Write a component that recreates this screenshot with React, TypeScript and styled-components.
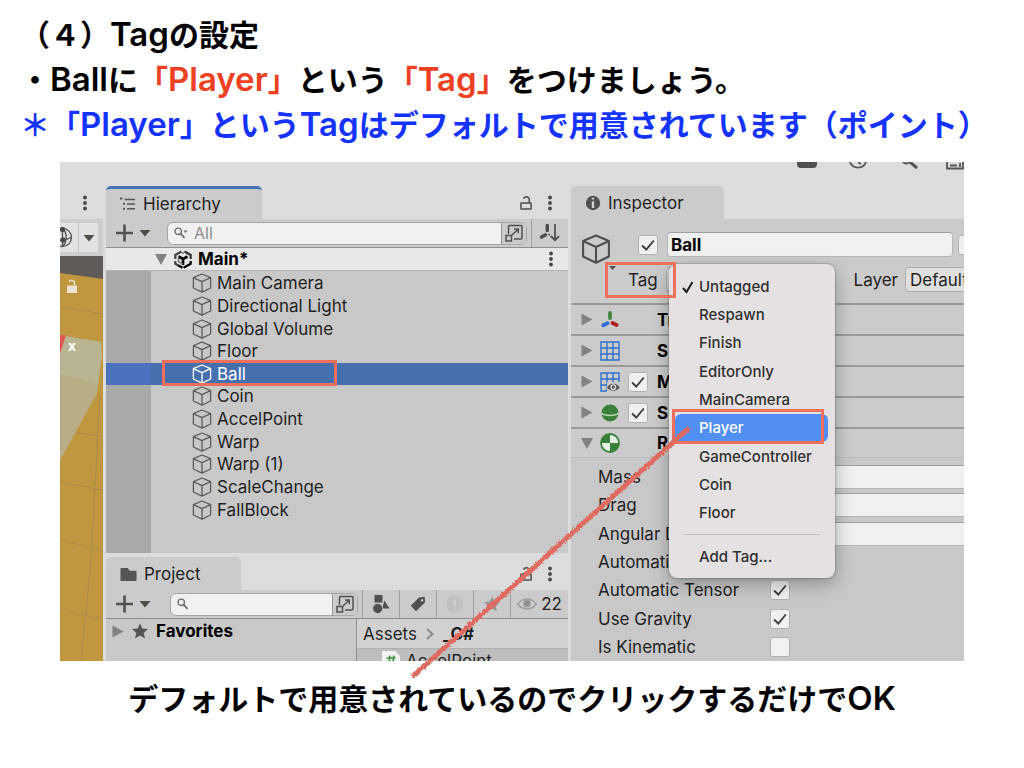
import React from 'react';
import styled, { createGlobalStyle, css } from 'styled-components';

const color = {
  chrome: '#dcdcdc',
  panel: '#cbcbcb',
  content: '#c8c8c8',
  field: '#f0f0f0',
  line: '#8f8f8f',
  ink: '#1f1f1f',
  mark: '#ee6f5c',
};

const GlobalStyle = createGlobalStyle`
  *, *::before, *::after { box-sizing: border-box; }
  body { margin: 0; background: #fff; }
  button, input, select { font: inherit; color: inherit; margin: 0; }
  ul { list-style: none; margin: 0; padding: 0; }
  svg { display: block; flex: none; }
`;

/* ---------- slide ---------- */

const Slide = styled.main`
  padding: 11px 0 47px;
  font-family: 'Noto Sans CJK JP', sans-serif;
  font-size: 30px;
  font-weight: 700;
  line-height: 45px;
  color: #000;
  text-spacing-trim: space-all;
`;

const Heading = styled.header`
  padding: 0 20px;
  white-space: nowrap;
`;

const Title = styled.h1`
  margin: 0;
  font-size: 30px;
  line-height: 45px;
`;

const Line = styled.p<{ $blue?: boolean }>`
  margin: 0;
  color: ${(p) => (p.$blue ? '#1433ff' : '#000')};
`;

const Latin = styled.span`
  font-family: Inter, 'Liberation Sans', sans-serif;
  font-size: 33px;
  font-weight: 600;
  line-height: 1;
`;

const Red = styled.em`
  font-style: normal;
  color: #ee4023;
`;

const Caption = styled.figcaption`
  margin-top: 14px;
  text-align: center;
  white-space: nowrap;
`;

const Figure = styled.figure`
  margin: 16px 0 0;
`;

/* ---------- editor window ---------- */

const Editor = styled.div`
  display: grid;
  grid-template-columns: 43px minmax(0, 462fr) minmax(0, 393fr);
  column-gap: 3px;
  margin: 0 60px;
  background: ${color.chrome};
  font-family: Inter, 'Liberation Sans', sans-serif;
  font-size: 17px;
  font-weight: 400;
  line-height: 20px;
  color: ${color.ink};
  white-space: nowrap;
`;

const Column = styled.section`
  position: relative;
  display: flex;
  flex-direction: column;
  min-width: 0;
`;

const Panel = styled.div`
  display: flex;
  flex: 1;
  flex-direction: column;
  overflow: hidden;
`;

const TopBar = styled.div`
  display: flex;
  justify-content: flex-end;
  height: 24px;
  overflow: hidden;
`;

const TabBar = styled.div`
  display: flex;
  align-items: center;
  height: 33px;
  padding-right: 15px;
`;

const Tab = styled.button<{ $active?: boolean; $width: number }>`
  display: flex;
  align-items: center;
  gap: 7px;
  align-self: stretch;
  width: ${(p) => p.$width}px;
  margin-right: auto;
  padding: ${(p) => (p.$active ? 0 : 1)}px 0 0 14px;
  border: 0;
  border-top: ${(p) => (p.$active ? '3px solid #4373b4' : '0')};
  border-radius: 5px 5px 0 0;
  background: ${color.panel};
`;

const IconButton = styled.button`
  display: flex;
  align-items: center;
  padding: 0;
  border: 0;
  background: none;
`;

const TabTools = styled.div`
  display: flex;
  gap: 15px;
`;

const Toolbar = styled.div`
  display: flex;
  align-items: center;
  height: 29px;
  padding-left: 10px;
  border-bottom: 1px solid ${color.line};
  background: ${color.panel};
`;

const AddButton = styled(IconButton)`
  gap: 6px;
  margin-right: 16px;
`;

const Search = styled.label<{ $wide?: boolean }>`
  display: flex;
  flex: 1;
  align-items: center;
  min-width: 0;
  height: 23px;
  margin-left: ${(p) => (p.$wide ? 0 : 3)}px;
  border: 1px solid #a6a6a6;
  border-radius: 6px;
  background: ${color.field};
  overflow: hidden;
`;

const SearchLead = styled.span`
  padding-left: 6px;
`;

const SearchInput = styled.input`
  flex: 1;
  min-width: 0;
  height: 21px;
  padding: 0 6px;
  border: 0;
  background: none;
  font-size: 16px;
  &::placeholder { color: #8d8d8d; opacity: 1; }
`;

const ExpandButton = styled(IconButton)`
  justify-content: center;
  width: 25px;
  height: 21px;
  border-left: 1px solid #999;
  background: ${color.panel};
`;

const ToolCell = styled(IconButton)<{ $wide?: boolean }>`
  justify-content: center;
  gap: 4px;
  width: ${(p) => (p.$wide ? 58 : 37)}px;
  height: 28px;
  border-left: 1px solid #a0a0a0;
`;

const ToolGap = styled.span`
  width: 4px;
`;

/* ---------- scene strip ---------- */

const KebabSlot = styled.span`
  padding-left: 22px;
`;

const SceneTools = styled.div`
  display: flex;
  height: 37px;
  padding: 4px 5px 4px 0;
  background: #cfcfcf;
`;

const SceneButton = styled(IconButton)`
  flex: 1;
  justify-content: center;
  border-left: 1px solid #c4c4c4;
  background: #e2e2e2;
  overflow: hidden;
  &:first-child {
    flex: 0 0 18px;
    justify-content: flex-end;
    padding-right: 5px;
    border-left: 0;
  }
`;

/* ---------- hierarchy ---------- */

const SceneRow = styled.div`
  display: flex;
  align-items: center;
  gap: 6px;
  height: 23px;
  padding: 0 14px 0 48px;
  border-bottom: 1px solid #b5b5b5;
  background: #e8e8e8;
  color: #000;
`;

const SceneName = styled.strong`
  margin-right: auto;
  font-weight: 700;
`;

const Tree = styled.div`
  padding: 1px 0 32px;
  background: linear-gradient(to right, #a9a9a9 45px, ${color.content} 45px);
`;

const TreeList = styled.ul`
  display: grid;
  grid-template-rows: repeat(11, 1fr);
  height: 249px;
`;

const TreeItem = styled.li<{ $selected?: boolean }>`
  position: relative;
  display: flex;
  align-items: center;
  gap: 5px;
  padding-left: 86px;
  color: ${(p) => (p.$selected ? '#fff' : color.ink)};
  background: ${(p) =>
    p.$selected ? 'linear-gradient(to right, #4a72bd 45px, #4670ad 45px)' : 'none'};
`;

const Mark = styled.span<{ $box: [number, number, number, number] }>`
  position: absolute;
  z-index: 3;
  left: ${(p) => p.$box[0]}px;
  top: ${(p) => p.$box[1]}px;
  width: ${(p) => p.$box[2]}px;
  height: ${(p) => p.$box[3]}px;
  border: 3px solid ${color.mark};
  pointer-events: none;
`;

/* ---------- project ---------- */

const ProjectTabs = styled(TabBar)`
  height: 37px;
  padding-top: 4px;
`;

const ProjectBody = styled.div`
  display: grid;
  grid-template-columns: 250px minmax(0, 1fr);
  flex: 1;
  background: ${color.content};
`;

const Favorites = styled.div`
  display: flex;
  align-items: center;
  gap: 8px;
  height: 24px;
  padding-left: 6px;
  font-weight: 700;
  color: #000;
`;

const Assets = styled.div`
  border-left: 1px solid #8f8f8f;
`;

const Breadcrumb = styled.nav`
  display: flex;
  align-items: center;
  gap: 9px;
  height: 30px;
  padding-left: 6px;
  border-bottom: 1px solid #b0b0b0;
  background: #d1d1d1;
`;

const Crumb = styled.a<{ $current?: boolean }>`
  color: inherit;
  text-decoration: none;
  font-weight: ${(p) => (p.$current ? 700 : 400)};
`;

const AssetRow = styled.div`
  display: flex;
  gap: 6px;
  height: 12px;
  padding: 2px 0 0 25px;
  background: #bebebe;
  overflow: hidden;
`;

/* ---------- inspector ---------- */

const ObjectHeader = styled.div`
  display: flex;
  flex-direction: column;
  gap: 10px;
  height: 84px;
  padding: 13px 0 0 10px;
  background: ${color.panel};
`;

const NameRow = styled.div`
  display: flex;
  align-items: center;
  height: 25px;
`;

const CubeSlot = styled.span`
  flex: none;
  width: 57px;
  padding-top: 8px;
`;

const textField = css`
  border: 1px solid #b7b7b7;
  border-top-color: #a0a0a0;
  background: ${color.field};
`;

const NameInput = styled.input`
  ${textField}
  flex: 1;
  min-width: 0;
  height: 25px;
  margin: 0 5px 0 9px;
  padding: 0 3px;
  border-radius: 4px;
  font-weight: 700;
  color: #000;
`;

const StaticSlot = styled.span`
  width: 6px;
  height: 20px;
  overflow: hidden;
`;

const FieldRow = styled.div`
  display: flex;
  align-items: center;
  height: 25px;
`;

const TagField = styled.div`
  position: relative;
  display: flex;
  flex: 1;
  align-items: center;
  height: 25px;
  margin-left: 24px;
  padding-left: 23px;
`;

const DropButton = styled.button`
  flex: none;
  height: 25px;
  padding: 0 4px;
  border: 1px solid #adadad;
  border-radius: 4px;
  background: #dfdfdf;
  text-align: left;
`;

const TagButton = styled(DropButton)`
  width: 166px;
  margin-left: 8px;
`;

const LayerButton = styled(DropButton)`
  width: 59px;
  padding-right: 0;
  margin: 0 0 0 7px;
  border-right: 0;
  border-radius: 4px 0 0 4px;
  overflow: hidden;
`;

const Corner = styled.span`
  position: absolute;
  left: 3px;
  top: -2px;
`;

const Menu = styled.div`
  position: absolute;
  z-index: 2;
  left: 64px;
  top: -3px;
  width: 166px;
  padding: 8px 7px 8px 6px;
  border-radius: 8px;
  background: #e5e0e2;
  box-shadow: 0 0 2px rgba(0, 0, 0, 0.5), 0 6px 18px rgba(0, 0, 0, 0.3);
  font-size: 15px;
`;

const MenuList = styled.ul`
  display: grid;
  grid-template-rows: repeat(9, 1fr);
  height: 255px;
`;

const MenuEntry = styled.li`
  position: relative;
  display: flex;
`;

const MenuButton = styled.button<{ $hot?: boolean }>`
  display: grid;
  grid-template-columns: 17px 1fr;
  align-items: center;
  width: 100%;
  height: 28px;
  padding: 1px 0 0 7px;
  border: 0;
  border-radius: 6px;
  background: ${(p) => (p.$hot ? '#528ff2' : 'none')};
  color: ${(p) => (p.$hot ? '#fff' : '#303030')};
  font-weight: 500;
  text-align: left;
`;

const Divider = styled.hr`
  margin: 7px 8px;
  border: 0;
  border-top: 1px solid #c6c1c3;
`;

const ComponentRow = styled.div<{ $open?: boolean }>`
  display: grid;
  grid-template-columns: 11px 20px 20px 1fr;
  column-gap: 8px;
  align-items: center;
  height: 31px;
  padding-left: 10px;
  border-top: 2px solid #999;
  border-bottom: ${(p) => (p.$open ? '1px solid #bdbdbd' : '0')};
  background: ${color.panel};
  font-weight: 700;
  color: #000;
`;

const ComponentName = styled.span`
  padding-left: 1px;
  overflow: hidden;
`;

const Properties = styled.div`
  display: grid;
  grid-template-rows: repeat(7, 1fr);
  height: 203px;
  padding-top: 5px;
  background: ${color.content};
`;

const Property = styled.label`
  display: grid;
  grid-template-columns: 172px minmax(0, 1fr);
  align-items: center;
  padding-left: 27px;
`;

const NumberInput = styled.input`
  ${textField}
  width: 100%;
  height: 24px;
  border-width: 1px 0 1px 1px;
  padding: 0 4px;
`;

const TickBox = styled.span`
  display: grid;
  flex: none;
  width: 20px;
  height: 20px;
  & > * { grid-area: 1 / 1; }
`;

const TickInput = styled.input`
  appearance: none;
  width: 20px;
  height: 20px;
  border: 1px solid #b2b2b2;
  border-radius: 3px;
  background: ${color.field};
`;

const Arrow = styled.svg`
  position: absolute;
  z-index: 3;
  left: -166px;
  top: 258px;
  pointer-events: none;
`;

/* ---------- icons ---------- */

const Kebab = () => (
  <svg width="6" height="16" viewBox="0 0 6 16" fill="#484848">
    <circle cx="3" cy="2.5" r="1.9" />
    <circle cx="3" cy="8" r="1.9" />
    <circle cx="3" cy="13.5" r="1.9" />
  </svg>
);

const Lock = () => (
  <svg width="12" height="16" viewBox="0 0 12 16" fill="none" stroke="#4d4d4d" strokeWidth="1.5">
    <rect x="0.9" y="8" width="10.2" height="6" rx="0.6" />
    <path d="M9.3 8V4.6A2.9 2.9 0 0 0 3.6 3.8" />
  </svg>
);

const Cube = ({ size = 20, stroke = '#5c5c5c', weight = 1.3 }) => (
  <svg width={size} height={size} viewBox="0 0 20 20" fill="none" stroke={stroke} strokeWidth={weight} strokeLinejoin="round">
    <path d="M10 1 18.6 4.7V15L10 19.2 1.4 15V4.7ZM1.4 4.7 10 8.7 18.6 4.7M10 8.7V19.2" />
  </svg>
);

const Fold = ({ open = false, width = 12 }) => (
  <svg width={width} height="13" viewBox="0 0 12 13" fill="#828282">
    <path d={open ? 'M0 1h12L6 12z' : 'M.5 .5v12L11.5 6.5z'} />
  </svg>
);

const Caret = ({ fill = '#4f4f48' }) => (
  <svg width="12" height="8" viewBox="0 0 12 8" fill={fill}>
    <path d="M.5 1h11L6 7.5z" />
  </svg>
);

const Plus = () => (
  <svg width="17" height="18" viewBox="0 0 17 18" stroke="#505050" strokeWidth="2.6">
    <path d="M8.5 .5v17M0 9h17" />
  </svg>
);

const Magnifier = ({ caret = false }) => (
  <svg width="14" height="12" viewBox="0 0 14 12" fill="none" stroke="#6b6b6b" strokeWidth="1.4">
    <circle cx="4.2" cy="4.3" r="3.2" />
    <path d="M6.6 6.6 10.5 10.8" strokeWidth="1.8" />
    {caret && <path d="M9.5 3.5h4L11.5 6z" fill="#6b6b6b" stroke="none" />}
  </svg>
);

const Expand = () => (
  <svg width="18" height="18" viewBox="0 0 18 18" fill="none" stroke="#505050" strokeWidth="1.5">
    <path d="M3.5 10V2.5a1 1 0 0 1 1-1H16a1 1 0 0 1 1 1V14a1 1 0 0 1-1 1H9" />
    <path d="M1 11.5h5.5v5.5H1zM7 11 13 5.2M9 5h4.3v4.3" />
  </svg>
);

const PickIcon = () => (
  <svg width="22" height="20" viewBox="0 0 22 20" fill="none" stroke="#4c4c4c" strokeWidth="1.7">
    <path d="M8.3 2.500V7.5" strokeWidth="3.4" strokeLinecap="round" />
    <path d="M2.500 14 6.300 12" strokeWidth="3.6" strokeLinecap="round" />
    <path d="M9.5 11 14 15.5" strokeDasharray="2 1.2" />
    <path d="M16 1V17M12 13.2 16 17.2 20 13.2" />
  </svg>
);

const ListIcon = () => (
  <svg width="16" height="14" viewBox="0 0 16 14" stroke="#555" strokeWidth="1.5" fill="#555">
    <path d="M4.5 2.5H15M7 7H15M7 11.7H15" />
    <path d="M0 1.5h2.4M3 6.8h2M3 11.7h2" strokeWidth="2" />
  </svg>
);

const InfoIcon = () => (
  <svg width="16" height="16" viewBox="0 0 16 16">
    <circle cx="8" cy="8" r="7.2" fill="#505050" />
    <path d="M8 2.8v1.8M8 6.3V13" stroke="#d2d2d2" strokeWidth="2.4" />
  </svg>
);

const FolderIcon = () => (
  <svg width="17" height="15" viewBox="0 0 18 15" fill="#555">
    <path d="M.5 1.8A1.3 1.3 0 0 1 1.8.5H8L10.5 3.5H17.5V14.5H.5Z" />
  </svg>
);

const UnityIcon = () => (
  <svg width="18" height="19" viewBox="0 0 18 19" fill="none" strokeWidth="2.2">
    <path d="M7.500 1.500 1.300 5V9M1.300 11V13.800L4 15.300" stroke="#444" />
    <path d="M10.500 1.500 16.700 5V9" stroke="#333" />
    <path d="M4 15.300 8.500 17.700M16.700 11V13.800L9.500 17.700" stroke="#000" />
    <path d="M4.500 6.500 9 9 13.500 6.500M9 9V15" stroke="#000" strokeWidth="2.600" />
    <path d="M4.500 6.500V11.500L9 14M9 2V4" stroke="#666" strokeWidth="1.4" />
  </svg>
);

const StarIcon = ({ size = 16, fill = '#555' }) => (
  <svg width={size} height={size} viewBox="0 0 16 16" fill={fill}>
    <path d="M8 .3 10.3 5.6 16 6.1 11.7 9.9 13 15.6 8 12.6 3 15.6 4.3 9.9 0 6.1 5.7 5.6Z" />
  </svg>
);

const ShapesIcon = () => (
  <svg width="18" height="19" viewBox="0 0 18 19" fill="#505050">
    <path d="M2.5 0h8v7.5h-8zM12.5 5.5 17.5 13.5H10z" />
    <circle cx="5.7" cy="13.5" r="5" stroke={color.panel} strokeWidth="0.8" />
  </svg>
);

const LabelIcon = () => (
  <svg width="16" height="16" viewBox="0 0 16 16" fill="#505050">
    <path fillRule="evenodd" d="M9 1.5 14.8.8 15 6.5 6 15.2 .8 9.8ZM12 3a1.3 1.3 0 1 0 .1 0Z" />
  </svg>
);

const AlertIcon = () => (
  <svg width="18" height="18" viewBox="0 0 18 18">
    <circle cx="9" cy="9" r="8.5" fill="#c1c1c1" />
    <path d="M9 3.5V10.5M9 12.5V14.5" stroke="#d0d0d0" strokeWidth="2" />
  </svg>
);

const EyeIcon = () => (
  <svg width="20" height="12" viewBox="0 0 20 12" fill="none" stroke="#9a9a9a" strokeWidth="1.3">
    <path d="M.8 6C5.5-.5 14.5-.5 19.2 6 14.5 12.5 5.5 12.5 .8 6Z" />
    <circle cx="10" cy="5.5" r="3.2" fill="#8e8e8e" />
  </svg>
);

const ScriptIcon = () => (
  <svg width="18" height="20" viewBox="0 0 18 20">
    <path d="M0 0H13L18 5V20H0Z" fill="#f3f3f3" />
    <path d="M8 4.5 6.5 13M12 4.5 10.5 13M4.5 7H13.5M4 10.5H13" stroke="#3f8f3c" strokeWidth="1.5" />
  </svg>
);

const Tick = ({ size = 20, stroke = '#404040', weight = 1.9 }) => (
  <svg width={size} height={size} viewBox="0 0 20 20" fill="none" stroke={stroke} strokeWidth={weight} pointerEvents="none">
    <path d="M4 10.5 8.3 14.5 15.8 5.5" />
  </svg>
);

const MenuTick = () => (
  <svg width="13" height="14" viewBox="0 0 13 14" fill="none" stroke="#1d1d1d" strokeWidth="2">
    <path d="M1 8 4.5 12 10.5 2" />
  </svg>
);

const GlobeIcon = () => (
  <svg width="20" height="21" viewBox="0 0 20 21" fill="none" stroke="#505050" strokeWidth="1.3">
    <circle cx="9.5" cy="10.5" r="9" />
    <path d="M9.5 1.5C14.5 6 14.5 15 9.5 19.5M9.5 1V20M2 12C7 13.5 13 13.5 18 10.5" />
    <circle cx="9.5" cy="2.5" r="2" fill="#404040" />
    <circle cx="10" cy="13" r="2" fill="#404040" />
  </svg>
);

const TransformIcon = () => (
  <svg width="20" height="20" viewBox="0 0 20 20" fill="none" strokeWidth="3.8" strokeLinecap="round">
    <path d="M10 3V8" stroke="#3e8440" />
    <path d="M3.3 15.3 7.5 13.2" stroke="#2c6fd0" />
    <path d="M12.5 13 16.7 15" stroke="#b0211b" />
  </svg>
);

const MeshIcon = ({ eye = false }) => (
  <svg width="20" height="20" viewBox="0 0 20 20" fill="none" stroke="#2f6fcc" strokeWidth="1.4">
    <path d="M1 1h18v18H1zM7 1v18M13 1v18M1 7h18M1 13h18" />
    {eye && (
      <>
        <path d="M7 10H20V20H7Z" fill={color.panel} stroke="none" />
        <path d="M6.5 15.5C10 9.8 17 9.8 20 15.5 17 20.5 10 20.5 6.5 15.5Z" fill="#555" stroke={color.panel} strokeWidth="1" />
        <circle cx="13.3" cy="15.2" r="2.3" fill="#555" stroke="#ddd" strokeWidth="1.3" />
      </>
    )}
  </svg>
);

const SphereIcon = () => (
  <svg width="20" height="20" viewBox="0 0 20 20">
    <circle cx="10" cy="10" r="8.5" fill="#39803a" />
    <path d="M1 10.5Q10 14.5 19 10.5" fill="none" stroke="#b9d6b6" strokeWidth="1.6" />
  </svg>
);

const RigidbodyIcon = () => (
  <svg width="20" height="20" viewBox="0 0 20 20">
    <circle cx="10" cy="10" r="9" fill="#e6efe4" stroke="#39803a" strokeWidth="1.8" />
    <path d="M10 10V1A9 9 0 0 0 1 10ZM10 10V19A9 9 0 0 0 19 10Z" fill="#39803a" />
  </svg>
);

const WindowTools = () => (
  <svg width="168" height="8" viewBox="0 0 168 8" fill="none" stroke="#555" strokeWidth="1.8">
    <path d="M1 0H21V2Q21 6 17 6H5Q1 6 1 2Z" fill="#505050" stroke="none" />
    <path d="M54 0A8.5 8.5 0 0 0 70 0M62 0 65 2" />
    <path d="M107 0Q110 3 114 0" />
    <path d="M114 0 121 6" strokeWidth="3" />
    <path d="M151 0V6.5H167V0M154 3.5H161M164 1V5" />
  </svg>
);

const SceneView = () => (
  <svg width="43" height="405" viewBox="0 0 43 405">
    <path d="M0 0H43V405H0Z" fill="#c0973f" />
    <path d="M0 0H43V23L0 17Z" fill="#605b58" />
    <g fill="none" stroke="#ab8b4d" strokeWidth="1">
      <path d="M0 51 43 58M0 173 43 181M0 226 43 234M0 284 43 294M0 353 43 364" />
      <path d="M40 138 31 304 21 405" />
    </g>
    <path d="M0 79 41 86 42 100 37 137 0 204Z" fill="#b9b491" />
    <path d="M0 118 38 128 37 137 0 204Z" fill="#b8ad86" />
    <path d="M0 79H6L0 98Z" fill="#dc5a50" />
    <path d="M7 29.5H17V37H7Z" fill="#ece4d0" />
    <path d="M14.5 29V27A2.7 2.7 0 0 0 9.3 26" fill="none" stroke="#ece4d0" strokeWidth="1.5" />
    <text x="8" y="95" fill="#fff" fontSize="14" fontWeight="700">x</text>
  </svg>
);

/* ---------- parts ---------- */

const Check = ({ checked, label }: { checked: boolean; label?: string }) => (
  <TickBox>
    <TickInput type="checkbox" defaultChecked={checked} aria-label={label} />
    {checked && <Tick />}
  </TickBox>
);

const PanelTools = () => (
  <TabTools>
    <IconButton aria-label="Lock"><Lock /></IconButton>
    <IconButton aria-label="Options"><Kebab /></IconButton>
  </TabTools>
);

const objects = [
  'Main Camera', 'Directional Light', 'Global Volume', 'Floor', 'Ball', 'Coin',
  'AccelPoint', 'Warp', 'Warp (1)', 'ScaleChange', 'FallBlock',
];

const tags = [
  'Untagged', 'Respawn', 'Finish', 'EditorOnly', 'MainCamera', 'Player',
  'GameController', 'Coin', 'Floor',
];

const components = [
  { name: 'Transform', icon: <TransformIcon /> },
  { name: 'Sphere', icon: <MeshIcon /> },
  { name: 'Mesh Renderer', icon: <MeshIcon eye />, toggle: true },
  { name: 'Sphere Collider', icon: <SphereIcon />, toggle: true },
  { name: 'Rigidbody', icon: <RigidbodyIcon />, open: true },
];

const numbers = ['Mass', 'Drag', 'Angular Drag'];

const flags = [
  { name: 'Automatic Center', on: true },
  { name: 'Automatic Tensor', on: true },
  { name: 'Use Gravity', on: true },
  { name: 'Is Kinematic', on: false },
];

const SceneColumn = () => (
  <Column aria-label="Scene">
    <TopBar />
    <TabBar>
      <IconButton aria-label="Scene options">
        <KebabSlot><Kebab /></KebabSlot>
      </IconButton>
    </TabBar>
    <SceneTools>
      <SceneButton aria-label="Gizmos"><GlobeIcon /></SceneButton>
      <SceneButton aria-label="Gizmo options"><Caret /></SceneButton>
    </SceneTools>
    <SceneView />
  </Column>
);

const Hierarchy = () => (
  <>
    <TopBar />
    <TabBar>
      <Tab $active $width={156}><ListIcon />Hierarchy</Tab>
      <PanelTools />
    </TabBar>
    <Toolbar>
      <AddButton aria-label="Create"><Plus /><Caret /></AddButton>
      <Search $wide>
        <SearchLead><Magnifier caret /></SearchLead>
        <SearchInput placeholder="All" aria-label="Search hierarchy" />
        <ExpandButton aria-label="Open search"><Expand /></ExpandButton>
      </Search>
      <ToolGap />
      <ToolCell aria-label="Pick"><PickIcon /></ToolCell>
    </Toolbar>
    <SceneRow>
      <Fold open width={14} />
      <UnityIcon />
      <SceneName>Main*</SceneName>
      <Kebab />
    </SceneRow>
    <Tree>
      <TreeList>
        {objects.map((name) => (
          <TreeItem key={name} $selected={name === 'Ball'}>
            <Cube stroke={name === 'Ball' ? '#fff' : '#5c5c5c'} />
            {name}
            {name === 'Ball' && <Mark $box={[56, -3, 175, 26]} />}
          </TreeItem>
        ))}
      </TreeList>
    </Tree>
  </>
);

const Project = () => (
  <>
    <ProjectTabs>
      <Tab $width={135}><FolderIcon />Project</Tab>
      <PanelTools />
    </ProjectTabs>
    <Toolbar>
      <AddButton aria-label="Create asset"><Plus /><Caret /></AddButton>
      <Search>
        <SearchLead><Magnifier /></SearchLead>
        <SearchInput aria-label="Search project" />
        <ExpandButton aria-label="Open search"><Expand /></ExpandButton>
      </Search>
      <ToolGap />
      <ToolCell aria-label="Filter by type"><ShapesIcon /></ToolCell>
      <ToolCell aria-label="Filter by label"><LabelIcon /></ToolCell>
      <ToolCell aria-label="Filter by log"><AlertIcon /></ToolCell>
      <ToolCell aria-label="Save search"><StarIcon fill="#969696" /></ToolCell>
      <ToolCell $wide><EyeIcon />22</ToolCell>
    </Toolbar>
    <ProjectBody>
      <Favorites><Fold /><StarIcon />Favorites</Favorites>
      <Assets>
        <Breadcrumb>
          <Crumb href="#assets">Assets</Crumb>
          <svg width="8" height="12" viewBox="0 0 8 12" fill="none" stroke="#8a8a8a" strokeWidth="2">
            <path d="M1 1 6.5 6 1 11" />
          </svg>
          <Crumb href="#scripts" $current>_C#</Crumb>
        </Breadcrumb>
        <AssetRow><ScriptIcon />AccelPoint</AssetRow>
      </Assets>
    </ProjectBody>
  </>
);

const TagMenu = () => (
  <Menu>
    <MenuList>
      {tags.map((tag) => (
        <MenuEntry key={tag}>
          <MenuButton $hot={tag === 'Player'}>
            <span>{tag === 'Untagged' && <MenuTick />}</span>
            {tag}
          </MenuButton>
          {tag === 'Player' && <Mark $box={[-3, -5, 152, 35]} />}
        </MenuEntry>
      ))}
    </MenuList>
    <Divider />
    <MenuButton><span />Add Tag...</MenuButton>
  </Menu>
);

const Inspector = () => (
  <Panel>
    <TopBar><WindowTools /></TopBar>
    <TabBar>
      <Tab $width={153}><InfoIcon />Inspector</Tab>
    </TabBar>
    <ObjectHeader>
      <NameRow>
        <CubeSlot><Cube size={30} stroke="#4f4f4f" weight={1.4} /></CubeSlot>
        <Check checked label="Active" />
        <NameInput defaultValue="Ball" aria-label="Name" />
        <StaticSlot><Check checked={false} label="Static" /></StaticSlot>
      </NameRow>
      <FieldRow>
        <TagField>
          <Corner>
            <svg width="10" height="6" viewBox="0 0 10 6"><path d="M1 1h7L4.5 5z" fill="#505050" /></svg>
          </Corner>
          Tag
          <TagButton aria-label="Tag" />
          <TagMenu />
          <Mark $box={[0, -5, 71, 36]} />
        </TagField>
        Layer
        <LayerButton>Default</LayerButton>
      </FieldRow>
    </ObjectHeader>
    {components.map((c) => (
      <ComponentRow key={c.name} $open={c.open}>
        <Fold open={c.open} />
        {c.icon}
        {c.toggle ? <Check checked label={c.name} /> : <span />}
        <ComponentName>{c.name}</ComponentName>
      </ComponentRow>
    ))}
    <Properties>
      {numbers.map((name) => (
        <Property key={name}>{name}<NumberInput /></Property>
      ))}
      {flags.map((f) => (
        <Property key={f.name}>{f.name}<Check checked={f.on} /></Property>
      ))}
    </Properties>
  </Panel>
);

const App = () => (
  <>
    <GlobalStyle />
    <Slide>
      <Heading>
        <Title>（４）<Latin>Tag</Latin>の設定</Title>
        <Line>
          ・<Latin>Ball</Latin>に<Red>「<Latin>Player</Latin>」</Red>という<Red>「<Latin>Tag</Latin>」</Red>をつけましょう。
        </Line>
        <Line $blue>
          ＊「<Latin>Player</Latin>」という<Latin>Tag</Latin>はデフォルトで用意されています（ポイント）
        </Line>
      </Heading>
      <Figure>
        <Editor>
          <SceneColumn />
          <Column>
            <Hierarchy />
            <Project />
          </Column>
          <Column>
            <Inspector />
            <Arrow width="290" height="262" viewBox="0 0 290 262">
              <filter id="chalk">
                <feTurbulence type="fractalNoise" baseFrequency="0.5" numOctaves="1" seed="4" />
                <feDisplacementMap in="SourceGraphic" xChannelSelector="R" yChannelSelector="G" scale="4" />
              </filter>
              <path d="M284 8 7 257" stroke="#df6a60" strokeWidth="5" fill="none" filter="url(#chalk)" />
            </Arrow>
          </Column>
        </Editor>
        <Caption>デフォルトで用意されているのでクリックするだけで<Latin>OK</Latin></Caption>
      </Figure>
    </Slide>
  </>
);

export default App;
